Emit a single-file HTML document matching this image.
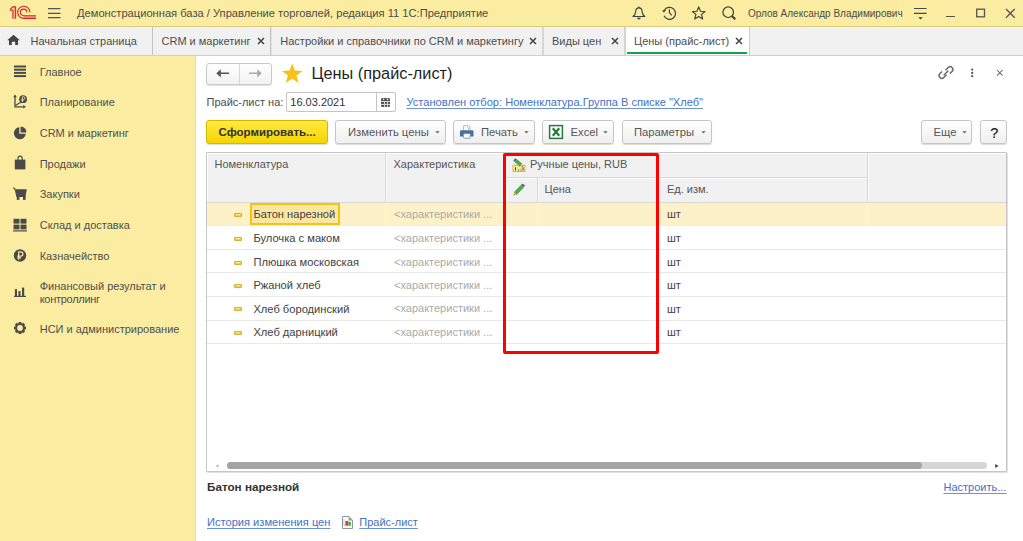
<!DOCTYPE html>
<html><head><meta charset="utf-8"><style>
html,body{margin:0;padding:0;width:1023px;height:541px;overflow:hidden;background:#fff;position:relative}
.t{position:absolute;white-space:nowrap;font-family:"Liberation Sans",sans-serif}
svg{overflow:visible}
</style></head><body>
<div style="position:absolute;left:0px;top:0px;width:1023px;height:26px;background:#faeca0"></div>
<div style="position:absolute;left:0px;top:26px;width:1023px;height:1px;background:#dccb78"></div>
<svg style="position:absolute;left:0px;top:0px" width="40" height="26" viewBox="0 0 40 26"><path d="M13.4 7.2H15.4V18.8H13.4Z" fill="#f0a878"/>
<path d="M12.9 18.8V10.2H10.4V9.3L12.6 6.9H15.6V18.8" fill="none" stroke="#d9262a" stroke-width="1.1"/>
<path d="M23.6 15.8H36V18.4H23.6Z" fill="#f0a878"/>
<path d="M29.9 12.4A6.1 6.1 0 1 0 23.7 18.4H36" fill="none" stroke="#d9262a" stroke-width="1.1"/>
<path d="M26.9 12.4A3.3 3.3 0 1 0 23.6 15.7H36" fill="none" stroke="#d9262a" stroke-width="1.1"/></svg>
<svg style="position:absolute;left:47px;top:7px" width="15" height="13" viewBox="0 0 15 13"><g stroke="#555" stroke-width="1.25"><path d="M1 1.6H13.5M1 6.3H13.5M1 10.7H13.5"/></g></svg>
<div class="t" style="left:77px;top:6.64px;font-size:11.15px;line-height:13px;color:#4d4d4d;font-weight:normal;">Демонстрационная база / Управление торговлей, редакция 11 1С:Предприятие</div>
<svg style="position:absolute;left:628px;top:3px" width="52" height="20" viewBox="0 0 52 20"><path d="M5 13.5H16.8C15.2 12.3 14.2 10.8 14.1 8.5C14 6 12.8 4.8 10.9 4.8C9 4.8 7.8 6 7.7 8.5C7.6 10.8 6.6 12.3 5 13.5Z" fill="none" stroke="#3f3f3f" stroke-width="1.15" stroke-linejoin="round"/><circle cx="10.9" cy="4.3" r="0.8" fill="#3f3f3f"/><path d="M9.1 14.7A1.8 1.8 0 0 0 12.7 14.7Z" fill="#3f3f3f"/><path d="M36.3 7.3A6 6 0 1 1 36.0 12.8" fill="none" stroke="#3f3f3f" stroke-width="1.2"/><path d="M34.3 7.3L38 6.9L35.8 9.8Z" fill="#3f3f3f"/><path d="M41.4 6.3V9.6L43.6 12.4" fill="none" stroke="#3f3f3f" stroke-width="1.15"/></svg>
<svg style="position:absolute;left:691px;top:5px" width="16" height="16" viewBox="0 0 16 16"><path d="M7.7 1.9 L9.5 6.2 L14 6.5 L10.5 9.4 L11.7 13.9 L7.7 11.4 L3.7 13.9 L4.9 9.4 L1.4 6.5 L5.9 6.2Z" fill="none" stroke="#3f3f3f" stroke-width="1.15" stroke-linejoin="round"/></svg>
<svg style="position:absolute;left:721px;top:6px" width="16" height="15" viewBox="0 0 16 15"><circle cx="7.2" cy="6.2" r="5.3" fill="none" stroke="#3f3f3f" stroke-width="1.2"/><path d="M10.9 10 L14.3 13.2" stroke="#3f3f3f" stroke-width="2.1"/></svg>
<div class="t" style="left:748px;top:7.54px;font-size:10px;line-height:12px;color:#4d4d4d;font-weight:normal;">Орлов Александр Владимирович</div>
<svg style="position:absolute;left:912px;top:7px" width="17" height="14" viewBox="0 0 17 14"><g stroke="#4a4a4a" stroke-width="1.2"><path d="M2 1.5H14.6M2 6.4H14.6"/></g><path d="M6.2 10.3H10.9L8.55 12.5Z" fill="#3f3f3f"/></svg>
<div style="position:absolute;left:946px;top:16px;width:9px;height:1.2px;background:#555"></div>
<svg style="position:absolute;left:975px;top:8px" width="11" height="10" viewBox="0 0 11 10"><rect x="1.7" y="1.2" width="7.8" height="7.6" fill="none" stroke="#555" stroke-width="1.3"/></svg>
<svg style="position:absolute;left:1005px;top:8px" width="11" height="11" viewBox="0 0 11 11"><path d="M1 1 L9.7 9.7 M9.7 1 L1 9.7" stroke="#555" stroke-width="1.3"/></svg>
<div style="position:absolute;left:0px;top:27px;width:1023px;height:28px;background:#f1f1f1"></div>
<div style="position:absolute;left:0px;top:55px;width:1023px;height:1px;background:#cfcfcf"></div>
<div style="position:absolute;left:152px;top:27px;width:1px;height:28px;background:#c4c4c4"></div>
<div style="position:absolute;left:270px;top:27px;width:1px;height:28px;background:#c4c4c4"></div>
<div style="position:absolute;left:271px;top:27px;width:1px;height:28px;background:#e2e2e2"></div>
<div style="position:absolute;left:542px;top:27px;width:2px;height:28px;background:#d6d6d6"></div>
<div style="position:absolute;left:624px;top:27px;width:2px;height:28px;background:#d4d4d4"></div>
<div style="position:absolute;left:626px;top:27px;width:123px;height:28px;background:#fff"></div>
<div style="position:absolute;left:749px;top:27px;width:1px;height:28px;background:#cfcfcf"></div>
<div style="position:absolute;left:627px;top:52px;width:120px;height:2px;background:#1aa04a"></div>
<svg style="position:absolute;left:7px;top:34px" width="14" height="12" viewBox="0 0 14 12"><path d="M6.5 0.7 L12.8 6.3 H11 V11 H8.2 V7.8 H4.8 V11 H2 V6.3 H0.2Z" fill="#444"/></svg>
<div class="t" style="left:30.5px;top:34.69px;font-size:11px;line-height:13px;color:#4d4d4d;font-weight:normal;">Начальная страница</div>
<div class="t" style="left:161.5px;top:34.69px;font-size:11px;line-height:13px;color:#4d4d4d;font-weight:normal;">CRM и маркетинг</div>
<svg style="position:absolute;left:257px;top:37px" width="8" height="8" viewBox="0 0 8 8"><path d="M1 1L7 7M7 1L1 7" stroke="#444" stroke-width="1.5"/></svg>
<div class="t" style="left:280.3px;top:34.69px;font-size:11px;line-height:13px;color:#4d4d4d;font-weight:normal;">Настройки и справочники по CRM и маркетингу</div>
<svg style="position:absolute;left:528.5px;top:37px" width="8" height="8" viewBox="0 0 8 8"><path d="M1 1L7 7M7 1L1 7" stroke="#444" stroke-width="1.5"/></svg>
<div class="t" style="left:552px;top:34.69px;font-size:11px;line-height:13px;color:#4d4d4d;font-weight:normal;">Виды цен</div>
<svg style="position:absolute;left:611px;top:37px" width="8" height="8" viewBox="0 0 8 8"><path d="M1 1L7 7M7 1L1 7" stroke="#444" stroke-width="1.5"/></svg>
<div class="t" style="left:634px;top:34.69px;font-size:11px;line-height:13px;color:#4d4d4d;font-weight:normal;">Цены (прайс-лист)</div>
<svg style="position:absolute;left:735px;top:37px" width="8" height="8" viewBox="0 0 8 8"><path d="M1 1L7 7M7 1L1 7" stroke="#444" stroke-width="1.5"/></svg>
<div style="position:absolute;left:0px;top:56px;width:195px;height:485px;background:#faeca0"></div>
<div style="position:absolute;left:195px;top:56px;width:1px;height:485px;background:#e9dda0"></div>
<div class="t" style="left:39.7px;top:65.69px;font-size:11px;line-height:13px;color:#505050;font-weight:normal;">Главное</div>
<div class="t" style="left:39.7px;top:96.19px;font-size:11px;line-height:13px;color:#505050;font-weight:normal;">Планирование</div>
<div class="t" style="left:39.7px;top:126.69px;font-size:11px;line-height:13px;color:#505050;font-weight:normal;">CRM и маркетинг</div>
<div class="t" style="left:39.7px;top:157.69px;font-size:11px;line-height:13px;color:#505050;font-weight:normal;">Продажи</div>
<div class="t" style="left:39.7px;top:188.19px;font-size:11px;line-height:13px;color:#505050;font-weight:normal;">Закупки</div>
<div class="t" style="left:39.7px;top:218.69px;font-size:11px;line-height:13px;color:#505050;font-weight:normal;">Склад и доставка</div>
<div class="t" style="left:39.7px;top:249.69px;font-size:11px;line-height:13px;color:#505050;font-weight:normal;">Казначейство</div>
<div class="t" style="left:39.7px;top:279.69px;font-size:11px;line-height:13px;color:#505050;font-weight:normal;">Финансовый результат и</div>
<div class="t" style="left:39.7px;top:292.69px;font-size:11px;line-height:13px;color:#505050;font-weight:normal;letter-spacing:-0.28px;">контроллинг</div>
<div class="t" style="left:39.7px;top:322.69px;font-size:11px;line-height:13px;color:#505050;font-weight:normal;">НСИ и администрирование</div>
<svg style="position:absolute;left:13px;top:65px" width="14" height="13" viewBox="0 0 14 13"><g fill="#4a4a4a"><rect x="1" y="0.5" width="12" height="2"/><rect x="1" y="3.7" width="12" height="2"/><rect x="1" y="6.9" width="12" height="2"/><rect x="1" y="10.1" width="12" height="2"/></g></svg>
<svg style="position:absolute;left:10px;top:92px" width="20" height="20" viewBox="0 0 20 20"><g fill="none" stroke="#4a4a4a" stroke-width="1.3"><path d="M5 3.5V14.8H14"/><path d="M5.5 13.5L8.5 11.5L11 10.5"/></g><path d="M3.2 5.2L5 2.6L6.8 5.2Z M13.3 13L16 14.8L13.3 16.6Z" fill="#4a4a4a"/><circle cx="13.1" cy="7.2" r="3.9" fill="#4a4a4a"/><path d="M12.4 10V4.8H13.7A1.3 1.3 0 0 1 13.7 7.4H11.4M11.4 8.6H13.6" stroke="#faeca0" stroke-width="0.8" fill="none"/></svg>
<svg style="position:absolute;left:13px;top:126px" width="14" height="14" viewBox="0 0 14 14"><path d="M6.3 1.2 A6 6 0 1 0 12.8 7.7 H6.3Z" fill="#4a4a4a"/><path d="M7.6 0.6 A5.6 5.6 0 0 1 13.4 6.4 H7.6Z" fill="#4a4a4a"/></svg>
<svg style="position:absolute;left:13px;top:155px" width="14" height="15" viewBox="0 0 14 15"><path d="M1.8 4.6H12.4V14.4H1.8Z" fill="#4a4a4a"/><path d="M5 6.5V3.2A2.1 2.1 0 0 1 9.2 3.2V6.5" fill="none" stroke="#4a4a4a" stroke-width="1.1"/></svg>
<svg style="position:absolute;left:12px;top:187px" width="16" height="14" viewBox="0 0 16 14"><path d="M1.2 0.8L3.3 2.2" stroke="#4a4a4a" stroke-width="1.3"/><path d="M2.6 2.3H14.8L13.6 8.9H4.2Z" fill="#4a4a4a"/><rect x="4.8" y="9.9" width="2.6" height="3" fill="#4a4a4a"/><rect x="11" y="9.9" width="2.6" height="3" fill="#4a4a4a"/><rect x="4.2" y="8.6" width="9.6" height="1.4" fill="#4a4a4a"/></svg>
<svg style="position:absolute;left:13px;top:218px" width="14" height="14" viewBox="0 0 14 14"><g fill="#4a4a4a"><rect x="0.5" y="0.8" width="6" height="4.8"/><rect x="7.5" y="0.8" width="6" height="4.8"/><rect x="0.5" y="6.6" width="6" height="4.8"/><rect x="7.5" y="6.6" width="6" height="4.8"/><rect x="0" y="12.3" width="14" height="1.2"/></g></svg>
<svg style="position:absolute;left:13px;top:249px" width="14" height="14" viewBox="0 0 14 14"><circle cx="7" cy="6.5" r="6.2" fill="#4a4a4a"/><path d="M5.7 10.8V2.9H7.8A2.1 2.1 0 0 1 7.8 7.1H4.3M4.3 8.9H8" stroke="#faeca0" stroke-width="1.2" fill="none"/></svg>
<svg style="position:absolute;left:10px;top:284px" width="20" height="16" viewBox="0 0 20 16"><g fill="#4a4a4a"><rect x="4.9" y="5.2" width="2.1" height="7"/><rect x="8.4" y="7.1" width="2.1" height="5.1"/><rect x="12" y="3.6" width="2.2" height="8.6"/><rect x="4.1" y="11.8" width="11.9" height="1.2"/></g></svg>
<svg style="position:absolute;left:13px;top:321px" width="14" height="14" viewBox="0 0 14 14"><path fill="#4a4a4a" fill-rule="evenodd" d="M5.34 2.60 L5.67 1.05 L8.33 1.05 L8.66 2.60 L8.94 2.72 L10.27 1.85 L12.15 3.73 L11.28 5.06 L11.40 5.34 L12.95 5.67 L12.95 8.33 L11.40 8.66 L11.28 8.94 L12.15 10.27 L10.27 12.15 L8.94 11.28 L8.66 11.40 L8.33 12.95 L5.67 12.95 L5.34 11.40 L5.06 11.28 L3.73 12.15 L1.85 10.27 L2.72 8.94 L2.60 8.66 L1.05 8.33 L1.05 5.67 L2.60 5.34 L2.72 5.06 L1.85 3.73 L3.73 1.85 L5.06 2.72Z M7 4.1A2.9 2.9 0 1 0 7 9.9A2.9 2.9 0 1 0 7 4.1Z"/></svg>
<div style="position:absolute;left:206px;top:63px;width:66px;height:22px;border:1px solid #c9c9c9;border-radius:3px;background:linear-gradient(#fff,#f2f2f2);box-sizing:border-box;box-shadow:0 1px 1px rgba(0,0,0,.12)"></div>
<div style="position:absolute;left:239px;top:64px;width:1px;height:20px;background:#d6d6d6"></div>
<svg style="position:absolute;left:215px;top:68px" width="16" height="11" viewBox="0 0 16 11"><path d="M1.3 5.3L5.8 1.3V4.5H14V6.1H5.8V9.6Z" fill="#555"/></svg>
<svg style="position:absolute;left:247px;top:68px" width="16" height="11" viewBox="0 0 16 11"><path d="M14.7 5.3L10.2 1.3V4.5H2V6.1H10.2V9.6Z" fill="#aaa"/></svg>
<svg style="position:absolute;left:281px;top:63px" width="22" height="21" viewBox="0 0 22 21"><path d="M11.2 0.6 L13.9 7.6 L21.5 7.9 L15.5 12.6 L17.6 20 L11.2 15.8 L4.8 20 L6.9 12.6 L0.9 7.9 L8.5 7.6Z" fill="#f3c31c"/></svg>
<div class="t" style="left:311.5px;top:63.35px;font-size:16.3px;line-height:20px;color:#1f1f1f;font-weight:normal;">Цены (прайс-лист)</div>
<svg style="position:absolute;left:938px;top:65px" width="16" height="15" viewBox="0 0 16 15"><g fill="none" stroke="#666" stroke-width="1.3" transform="translate(8 7.5) scale(1.1) translate(-8 -7.5)"><path d="M7.5 5.5L10 3A2.47 2.47 0 0 1 13.5 6.5L11.5 8.5"/><path d="M8.5 9.5L6 12A2.47 2.47 0 0 1 2.5 8.5L4.5 6.5"/><path d="M5.9 10.1L10.1 5.9"/></g></svg>
<svg style="position:absolute;left:970px;top:68px" width="5" height="10" viewBox="0 0 5 10"><g fill="#555"><circle cx="2.2" cy="1.6" r="1.15"/><circle cx="2.2" cy="4.9" r="1.15"/><circle cx="2.2" cy="8.2" r="1.15"/></g></svg>
<svg style="position:absolute;left:996px;top:69px" width="8" height="8" viewBox="0 0 8 8"><path d="M1 1L6.6 6.6M6.6 1L1 6.6" stroke="#666" stroke-width="1.05"/></svg>
<div class="t" style="left:206.5px;top:96.19px;font-size:11px;line-height:13px;color:#4d4d4d;font-weight:normal;">Прайс-лист на:</div>
<div style="position:absolute;left:286px;top:92px;width:110px;height:20px;border:1px solid #c4c4c4;border-radius:2px;background:#fff;box-sizing:border-box"></div>
<div style="position:absolute;left:376px;top:93px;width:1px;height:18px;background:#c4c4c4"></div>
<div class="t" style="left:290.3px;top:96.19px;font-size:11px;line-height:13px;color:#333;font-weight:normal;">16.03.2021</div>
<svg style="position:absolute;left:380px;top:97px" width="11" height="11" viewBox="0 0 11 11"><path d="M1 2.2Q1 1 2.2 1H8.8Q10 1 10 2.2V8.8Q10 10 8.8 10H2.2Q1 10 1 8.8Z" fill="#555"/><circle cx="3.5" cy="2.3" r="0.8" fill="#f4f4f4"/><circle cx="7.5" cy="2.3" r="0.8" fill="#f4f4f4"/><g fill="#fff" opacity="0.75" shape-rendering="crispEdges"><rect x="1" y="4" width="9" height="1"/><rect x="1" y="7" width="9" height="1"/><rect x="3.5" y="4" width="1" height="6"/><rect x="6.5" y="4" width="1" height="6"/></g></svg>
<div class="t" style="left:406.5px;top:96.15px;font-size:11.1px;line-height:13px;color:#4570c4;font-weight:normal;text-decoration:underline;text-decoration-skip-ink:none;text-underline-offset:1.5px;text-decoration-color:#6f92d6;">Установлен отбор: Номенклатура.Группа В списке "Хлеб"</div>
<div style="position:absolute;left:206px;top:120px;width:122px;height:24px;border:1px solid #d2b800;border-radius:3px;background:linear-gradient(#ffea40,#f5d500);box-sizing:border-box;box-shadow:0 1px 1px rgba(0,0,0,.15)"></div>
<div class="t" style="left:218.5px;top:124.52px;font-size:11.5px;line-height:14px;color:#333;font-weight:bold;">Сформировать...</div>
<div style="position:absolute;left:335px;top:120px;width:111px;height:24px;border:1px solid #c6c6c6;border-radius:3px;background:linear-gradient(#ffffff,#efefef);box-sizing:border-box;box-shadow:0 1px 1px rgba(0,0,0,.15)"></div>
<div class="t" style="left:348px;top:124.60px;font-size:11.25px;line-height:14px;color:#555;font-weight:normal;">Изменить цены</div>
<svg style="position:absolute;left:434.5px;top:131px" width="5" height="3" viewBox="0 0 5 3"><path d="M0.3 0.2H4.7L2.5 2.6Z" fill="#666"/></svg>
<div style="position:absolute;left:453px;top:120px;width:82px;height:24px;border:1px solid #c6c6c6;border-radius:3px;background:linear-gradient(#ffffff,#efefef);box-sizing:border-box;box-shadow:0 1px 1px rgba(0,0,0,.15)"></div>
<div class="t" style="left:481px;top:124.60px;font-size:11.25px;line-height:14px;color:#555;font-weight:normal;">Печать</div>
<svg style="position:absolute;left:523.5px;top:131px" width="5" height="3" viewBox="0 0 5 3"><path d="M0.3 0.2H4.7L2.5 2.6Z" fill="#666"/></svg>
<svg style="position:absolute;left:459px;top:124px" width="16" height="16" viewBox="0 0 16 16"><path d="M4.6 7V1.6H9.6L11 3V7" fill="#fff" stroke="#b4bcc6" stroke-width="1"/><circle cx="8.8" cy="3.8" r="0.5" fill="#4a6f9c"/><circle cx="9.5" cy="5" r="0.5" fill="#4a6f9c"/><path d="M1 7.6Q1 6.3 2.3 6.3H13.2Q14.5 6.3 14.5 7.6V12.6H1Z" fill="#48709e"/><rect x="4.6" y="9.7" width="6.6" height="4.5" rx="0.6" fill="#fff" stroke="#8a9bb0" stroke-width="1"/></svg>
<div style="position:absolute;left:542px;top:120px;width:72px;height:24px;border:1px solid #c6c6c6;border-radius:3px;background:linear-gradient(#ffffff,#efefef);box-sizing:border-box;box-shadow:0 1px 1px rgba(0,0,0,.15)"></div>
<div class="t" style="left:570.5px;top:124.60px;font-size:11.25px;line-height:14px;color:#555;font-weight:normal;">Excel</div>
<svg style="position:absolute;left:602.5px;top:131px" width="5" height="3" viewBox="0 0 5 3"><path d="M0.3 0.2H4.7L2.5 2.6Z" fill="#666"/></svg>
<svg style="position:absolute;left:548px;top:124px" width="16" height="16" viewBox="0 0 16 16"><rect x="1.6" y="1.6" width="12.8" height="12.8" fill="#fff" stroke="#237d3a" stroke-width="1.5"/><path d="M4.8 4.3L11.2 11.7M11.2 4.3L4.8 11.7" stroke="#237d3a" stroke-width="2.2"/></svg>
<div style="position:absolute;left:622px;top:120px;width:90px;height:24px;border:1px solid #c6c6c6;border-radius:3px;background:linear-gradient(#ffffff,#efefef);box-sizing:border-box;box-shadow:0 1px 1px rgba(0,0,0,.15)"></div>
<div class="t" style="left:634px;top:124.60px;font-size:11.25px;line-height:14px;color:#555;font-weight:normal;">Параметры</div>
<svg style="position:absolute;left:700.5px;top:131px" width="5" height="3" viewBox="0 0 5 3"><path d="M0.3 0.2H4.7L2.5 2.6Z" fill="#666"/></svg>
<div style="position:absolute;left:921px;top:120px;width:51px;height:24px;border:1px solid #c6c6c6;border-radius:3px;background:linear-gradient(#ffffff,#efefef);box-sizing:border-box;box-shadow:0 1px 1px rgba(0,0,0,.15)"></div>
<div class="t" style="left:933.5px;top:124.60px;font-size:11.25px;line-height:14px;color:#555;font-weight:normal;">Еще</div>
<svg style="position:absolute;left:961.5px;top:131px" width="5" height="3" viewBox="0 0 5 3"><path d="M0.3 0.2H4.7L2.5 2.6Z" fill="#666"/></svg>
<div style="position:absolute;left:980px;top:120px;width:27px;height:24px;border:1px solid #c6c6c6;border-radius:3px;background:linear-gradient(#ffffff,#efefef);box-sizing:border-box;box-shadow:0 1px 1px rgba(0,0,0,.15)"></div>
<div class="t" style="left:990.2px;top:124.78px;font-size:14.5px;line-height:17px;color:#222;font-weight:normal;-webkit-text-stroke:0.2px #222;">?</div>
<div style="position:absolute;left:206px;top:152px;width:801px;height:320px;border:1px solid #c6c6c6;box-sizing:border-box;background:#fff;box-shadow:1px 1px 0 #e0e0e0;border-radius:0 0 2px 0"></div>
<div style="position:absolute;left:207px;top:153px;width:799px;height:49px;background:#f1f1f1;border-left:1px solid #fff;border-top:1px solid #fff;box-sizing:border-box"></div>
<div style="position:absolute;left:207px;top:202px;width:799px;height:1px;background:#d8d8d8"></div>
<div style="position:absolute;left:385px;top:153px;width:1px;height:49px;background:#d8d8d8"></div>
<div style="position:absolute;left:386px;top:154px;width:1px;height:48px;background:#fbfbfb"></div>
<div style="position:absolute;left:503px;top:153px;width:1px;height:49px;background:#d8d8d8"></div>
<div style="position:absolute;left:504px;top:154px;width:1px;height:48px;background:#fbfbfb"></div>
<div style="position:absolute;left:867px;top:153px;width:1px;height:49px;background:#d8d8d8"></div>
<div style="position:absolute;left:868px;top:154px;width:1px;height:48px;background:#fbfbfb"></div>
<div style="position:absolute;left:503px;top:177px;width:364px;height:1px;background:#d8d8d8"></div>
<div style="position:absolute;left:504px;top:178px;width:363px;height:1px;background:#fbfbfb"></div>
<div style="position:absolute;left:537px;top:178px;width:1px;height:24px;background:#d8d8d8"></div>
<div style="position:absolute;left:538px;top:179px;width:1px;height:23px;background:#fbfbfb"></div>
<div style="position:absolute;left:657px;top:178px;width:1px;height:24px;background:#d8d8d8"></div>
<div style="position:absolute;left:658px;top:179px;width:1px;height:23px;background:#fbfbfb"></div>
<div class="t" style="left:214.5px;top:158.19px;font-size:11px;line-height:13px;color:#555;font-weight:normal;">Номенклатура</div>
<div class="t" style="left:393.5px;top:158.19px;font-size:11px;line-height:13px;color:#555;font-weight:normal;">Характеристика</div>
<div class="t" style="left:530px;top:158.19px;font-size:11px;line-height:13px;color:#555;font-weight:normal;">Ручные цены, RUB</div>
<div class="t" style="left:544.5px;top:183.19px;font-size:11px;line-height:13px;color:#555;font-weight:normal;">Цена</div>
<div class="t" style="left:667px;top:183.19px;font-size:11px;line-height:13px;color:#555;font-weight:normal;">Ед. изм.</div>
<svg style="position:absolute;left:511px;top:157px" width="16" height="16" viewBox="0 0 16 16"><rect x="2" y="8.2" width="12" height="6.3" fill="#f3ea94" stroke="#cdb94a" stroke-width="1"/><path d="M4.5 10.3v3M7 13h1M9.5 13h1M12 10.3v3" stroke="#444" stroke-width="1"/><path d="M10.84 6.84 L5.54 2.33 L3.60 4.61 L8.90 9.13Z" fill="#4cb04c" stroke="#2f6e2f" stroke-width=".5"/><path d="M5.54 2.33 L4.17 1.16 L2.23 3.44 L3.60 4.61Z" fill="#566a80"/><path d="M10.84 6.84 L12.00 9.80 L8.90 9.13Z" fill="#f2b13c"/><path d="M12.00 9.80 L11.45 8.74 L10.87 9.43Z" fill="#333"/></svg>
<svg style="position:absolute;left:511px;top:182px" width="16" height="16" viewBox="0 0 16 16"><path d="M5.69 12.46 L12.83 4.91 L10.50 2.71 L3.36 10.27Z" fill="#4cb04c" stroke="#2f6e2f" stroke-width=".5"/><path d="M12.83 4.91 L14.06 3.60 L11.74 1.40 L10.50 2.71Z" fill="#566a80"/><path d="M5.69 12.46 L2.60 13.40 L3.36 10.27Z" fill="#f2b13c"/><path d="M2.60 13.40 L3.68 12.91 L3.03 12.29Z" fill="#333"/></svg>
<div style="position:absolute;left:207px;top:203px;width:799px;height:22px;background:#fdf1c8"></div>
<div style="position:absolute;left:385px;top:203px;width:1px;height:22px;background:#fff8e3"></div>
<div style="position:absolute;left:503px;top:203px;width:1px;height:22px;background:#fff8e3"></div>
<div style="position:absolute;left:537px;top:203px;width:1px;height:22px;background:#fff8e3"></div>
<div style="position:absolute;left:657px;top:203px;width:1px;height:22px;background:#fff8e3"></div>
<div style="position:absolute;left:867px;top:203px;width:1px;height:22px;background:#fff8e3"></div>
<div style="position:absolute;left:207px;top:249px;width:799px;height:1px;background:#e8e8e8"></div>
<div style="position:absolute;left:207px;top:272px;width:799px;height:1px;background:#e8e8e8"></div>
<div style="position:absolute;left:207px;top:296px;width:799px;height:1px;background:#e8e8e8"></div>
<div style="position:absolute;left:207px;top:320px;width:799px;height:1px;background:#e8e8e8"></div>
<div style="position:absolute;left:207px;top:343px;width:799px;height:1px;background:#e8e8e8"></div>
<div style="position:absolute;left:207px;top:225px;width:799px;height:1px;background:#ececec"></div>
<div style="position:absolute;left:250px;top:203px;width:90px;height:22px;border:2px solid #f5c316;box-sizing:border-box;background:#fbe7a0"></div>
<div class="t" style="left:253.4px;top:208.44px;font-size:11.15px;line-height:13px;color:#424242;font-weight:normal;">Батон нарезной</div>
<div class="t" style="left:394px;top:208.19px;font-size:11px;line-height:13px;color:#aaa;font-weight:normal;">&lt;характеристики ...</div>
<div class="t" style="left:667px;top:208.49px;font-size:11px;line-height:13px;color:#444;font-weight:normal;">шт</div>
<svg style="position:absolute;left:234px;top:213.0px" width="8" height="4" viewBox="0 0 8 4"><rect x="0.4" y="0.4" width="7.2" height="3.2" rx="0.8" fill="#e8c93a" stroke="#c2a21e" stroke-width=".8"/><path d="M1.8 1.8H6.2" stroke="#fff5b0" stroke-width=".9"/></svg>
<div class="t" style="left:253.4px;top:231.94px;font-size:11.15px;line-height:13px;color:#424242;font-weight:normal;">Булочка с маком</div>
<div class="t" style="left:394px;top:231.69px;font-size:11px;line-height:13px;color:#aaa;font-weight:normal;">&lt;характеристики ...</div>
<div class="t" style="left:667px;top:231.99px;font-size:11px;line-height:13px;color:#444;font-weight:normal;">шт</div>
<svg style="position:absolute;left:234px;top:236.5px" width="8" height="4" viewBox="0 0 8 4"><rect x="0.4" y="0.4" width="7.2" height="3.2" rx="0.8" fill="#e8c93a" stroke="#c2a21e" stroke-width=".8"/><path d="M1.8 1.8H6.2" stroke="#fff5b0" stroke-width=".9"/></svg>
<div class="t" style="left:253.4px;top:255.94px;font-size:11.15px;line-height:13px;color:#424242;font-weight:normal;">Плюшка московская</div>
<div class="t" style="left:394px;top:255.69px;font-size:11px;line-height:13px;color:#aaa;font-weight:normal;">&lt;характеристики ...</div>
<div class="t" style="left:667px;top:255.99px;font-size:11px;line-height:13px;color:#444;font-weight:normal;">шт</div>
<svg style="position:absolute;left:234px;top:260.5px" width="8" height="4" viewBox="0 0 8 4"><rect x="0.4" y="0.4" width="7.2" height="3.2" rx="0.8" fill="#e8c93a" stroke="#c2a21e" stroke-width=".8"/><path d="M1.8 1.8H6.2" stroke="#fff5b0" stroke-width=".9"/></svg>
<div class="t" style="left:253.4px;top:279.44px;font-size:11.15px;line-height:13px;color:#424242;font-weight:normal;">Ржаной хлеб</div>
<div class="t" style="left:394px;top:279.19px;font-size:11px;line-height:13px;color:#aaa;font-weight:normal;">&lt;характеристики ...</div>
<div class="t" style="left:667px;top:279.49px;font-size:11px;line-height:13px;color:#444;font-weight:normal;">шт</div>
<svg style="position:absolute;left:234px;top:284.0px" width="8" height="4" viewBox="0 0 8 4"><rect x="0.4" y="0.4" width="7.2" height="3.2" rx="0.8" fill="#e8c93a" stroke="#c2a21e" stroke-width=".8"/><path d="M1.8 1.8H6.2" stroke="#fff5b0" stroke-width=".9"/></svg>
<div class="t" style="left:253.4px;top:302.74px;font-size:11.15px;line-height:13px;color:#424242;font-weight:normal;">Хлеб бородинский</div>
<div class="t" style="left:394px;top:302.49px;font-size:11px;line-height:13px;color:#aaa;font-weight:normal;">&lt;характеристики ...</div>
<div class="t" style="left:667px;top:302.79px;font-size:11px;line-height:13px;color:#444;font-weight:normal;">шт</div>
<svg style="position:absolute;left:234px;top:307.3px" width="8" height="4" viewBox="0 0 8 4"><rect x="0.4" y="0.4" width="7.2" height="3.2" rx="0.8" fill="#e8c93a" stroke="#c2a21e" stroke-width=".8"/><path d="M1.8 1.8H6.2" stroke="#fff5b0" stroke-width=".9"/></svg>
<div class="t" style="left:253.4px;top:326.44px;font-size:11.15px;line-height:13px;color:#424242;font-weight:normal;">Хлеб дарницкий</div>
<div class="t" style="left:394px;top:326.19px;font-size:11px;line-height:13px;color:#aaa;font-weight:normal;">&lt;характеристики ...</div>
<div class="t" style="left:667px;top:326.49px;font-size:11px;line-height:13px;color:#444;font-weight:normal;">шт</div>
<svg style="position:absolute;left:234px;top:331.0px" width="8" height="4" viewBox="0 0 8 4"><rect x="0.4" y="0.4" width="7.2" height="3.2" rx="0.8" fill="#e8c93a" stroke="#c2a21e" stroke-width=".8"/><path d="M1.8 1.8H6.2" stroke="#fff5b0" stroke-width=".9"/></svg>
<div style="position:absolute;left:227px;top:462px;width:760px;height:7px;background:#d6d6d6;border-radius:4px"></div>
<div style="position:absolute;left:227px;top:462px;width:695px;height:7px;background:#a4a4a4;border-radius:4px"></div>
<svg style="position:absolute;left:214px;top:463px" width="6" height="6" viewBox="0 0 6 6"><path d="M4.5 1.2V4.8L1.5 3Z" fill="#bbb"/></svg>
<svg style="position:absolute;left:994px;top:463px" width="6" height="6" viewBox="0 0 6 6"><path d="M1.2 1V5L4.6 3Z" fill="#444"/></svg>
<div style="position:absolute;left:503px;top:153px;width:156px;height:201px;border:3px solid #ff0000;box-sizing:border-box;border-radius:2px"></div>
<div class="t" style="left:207px;top:479.95px;font-size:11.7px;line-height:14px;color:#333;font-weight:bold;">Батон нарезной</div>
<div class="t" style="left:943.5px;top:481.19px;font-size:11px;line-height:13px;color:#4570c4;font-weight:normal;text-decoration:underline;text-decoration-skip-ink:none;text-underline-offset:1.5px;text-decoration-color:#6f92d6;">Настроить...</div>
<div class="t" style="left:207px;top:516.15px;font-size:11.1px;line-height:13px;color:#4570c4;font-weight:normal;text-decoration:underline;text-decoration-skip-ink:none;text-underline-offset:1.5px;text-decoration-color:#6f92d6;">История изменения цен</div>
<svg style="position:absolute;left:341px;top:516px" width="13" height="13" viewBox="0 0 13 13"><path d="M1.5 0.5H7.9L11.5 4.1V12.5H1.5Z" fill="#fff" stroke="#8d98a3" stroke-width="1"/><path d="M7.6 0.5V4.4H11.5Z" fill="#8d98a3"/><path d="M3 2.8V9.6H10" fill="none" stroke="#b9a9a9" stroke-width="0.6"/><rect x="4.4" y="4.9" width="2.8" height="4.6" fill="#e8352a"/><rect x="7.4" y="5.8" width="2.4" height="3.7" fill="#3ea83e"/></svg>
<div class="t" style="left:359.3px;top:516.19px;font-size:11px;line-height:13px;color:#4570c4;font-weight:normal;text-decoration:underline;text-decoration-skip-ink:none;text-underline-offset:1.5px;text-decoration-color:#6f92d6;">Прайс-лист</div>
</body></html>
